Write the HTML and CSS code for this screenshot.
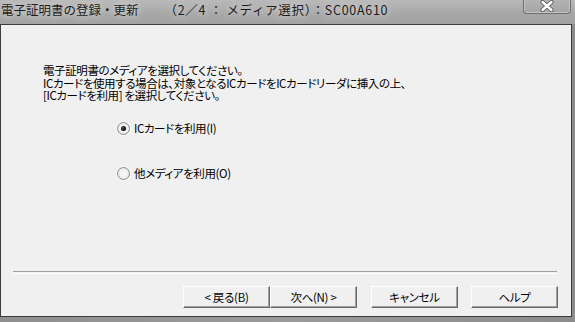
FILE: index.html
```html
<!DOCTYPE html>
<html lang="ja">
<head>
  <meta charset="UTF-8">
  <title>電子証明書の登録・更新</title>
  <link rel="stylesheet" href="styles.css">
</head>
<body>
  <div class="window">
    <!-- Title bar -->
    <div class="titlebar">
      <span class="title">電子証明書の登録・更新<span class="title-sub">（2／4 ： メディア選択）：SC00A610</span></span>
      <div class="close-btn">
        <svg width="18" height="12" viewBox="0 0 18 12">
          <path d="M4.5 2 L13.5 10 M13.5 2 L4.5 10" stroke="#5a5a5a" stroke-width="4.2" stroke-linecap="round"/>
          <path d="M4.5 2 L13.5 10 M13.5 2 L4.5 10" stroke="#ffffff" stroke-width="2.4" stroke-linecap="round"/>
        </svg>
      </div>
    </div>

    <!-- Client area -->
    <div class="client">
      <div class="message">
        <p>電子証明書のメディアを選択してください。</p>
        <p>ICカードを使用する場合は、対象となるICカードをICカードリーダに挿入の上、</p>
        <p>[ICカードを利用] を選択してください。</p>
      </div>

      <div class="options">
        <label class="option">
          <span class="radio checked"></span>
          <span>ICカードを利用(I)</span>
        </label>
        <label class="option">
          <span class="radio"></span>
          <span>他メディアを利用(O)</span>
        </label>
      </div>

      <div class="separator"></div>

      <div class="buttons">
        <div class="btn-pair">
          <button class="btn">&lt; 戻る(B)</button>
          <button class="btn">次へ(N) &gt;</button>
        </div>
        <button class="btn">キャンセル</button>
        <button class="btn">ヘルプ</button>
      </div>
    </div>
  </div>
</body>
</html>
```

FILE: styles.css
```css
body {
  margin: 0;
  width: 575px;
  height: 322px;
  overflow: hidden;
  background: #8d8d8d;
  font-family: "Noto Sans CJK JP", sans-serif;
}
.window {
  width: 575px;
  height: 322px;
  display: flex;
  flex-direction: column;
  background: linear-gradient(to right, #8f8f8f, #9a9a9a 50%, #8c8c8c);
}

/* title bar */
.titlebar {
  height: 24px;
  display: flex;
  align-items: flex-start;
  justify-content: space-between;
  background: linear-gradient(to bottom, #b9b9b9, #a6a6a6 60%, #a2a2a2);
}
.title {
  margin: 2px 0 0 1px;
  font-size: 12.5px;
  line-height: 16px;
  color: #1c1c1c;
  white-space: nowrap;
  text-shadow: 0 0 6px #d8d8d8, 0 0 10px #d0d0d0;
}
.title-sub {
  margin-left: 26px;
  letter-spacing: 0.7px;
}
.close-btn {
  width: 46px;
  height: 14px;
  margin: -1px 4px 0 0;
  border: 1px solid #6e6e6e;
  border-top: none;
  border-radius: 0 0 4px 4px;
  box-shadow: inset 0 0 0 1px #c4c4c4;
  background: linear-gradient(to bottom, #b4b4b4, #a4a4a4);
  display: flex;
  justify-content: center;
  align-items: center;
}

/* client area */
.client {
  width: 570px;
  height: 291px;
  margin-bottom: 5px;
  border: 1px solid #3c3c3c;
  background: #f0f0f0;
  display: flex;
  flex-direction: column;
  font-size: 11.5px;
  letter-spacing: -0.4px;
  color: #000;
  font-feature-settings: "palt";
}
.message {
  padding: 39px 0 0 42px;
}
.message p {
  margin: 0;
  line-height: 12.5px;
  white-space: nowrap;
}
.options {
  margin: 20px 0 0 116px;
  display: flex;
  flex-direction: column;
  gap: 32px;
}
.option {
  display: flex;
  align-items: center;
  gap: 4px;
  height: 13px;
  line-height: 13px;
}
.radio {
  width: 11px;
  height: 11px;
  border: 1px solid #8c8c8c;
  border-radius: 50%;
  background: radial-gradient(circle at 50% 50%, #f4f4f4 40%, #dcdcdc 90%);
  box-shadow: 0 0 0 1px #fbfbfb;
  display: flex;
  justify-content: center;
  align-items: center;
}
.radio.checked::after {
  content: "";
  width: 5px;
  height: 5px;
  border-radius: 50%;
  background: radial-gradient(circle at 40% 40%, #555, #000 70%);
}

.separator {
  margin: auto 14px 0 12px;
  height: 1px;
  border-top: 1px solid #a0a0a0;
  border-bottom: 1px solid #ffffff;
}

.buttons {
  display: flex;
  justify-content: flex-end;
  gap: 13px;
  margin: 12px 13px 8px 0;
}
.btn-pair {
  display: flex;
  margin-right: 1px;
}
.btn {
  width: 87px;
  height: 22px;
  padding: 0;
  font-family: "Noto Sans CJK JP", sans-serif;
  font-feature-settings: "palt";
  font-size: 11.5px;
  letter-spacing: -0.3px;
  color: #000;
  background: #f0f0f0;
  border: 1px solid;
  border-color: #ffffff #696969 #696969 #ffffff;
  box-shadow: inset -1px -1px 0 #a0a0a0;
}
```
